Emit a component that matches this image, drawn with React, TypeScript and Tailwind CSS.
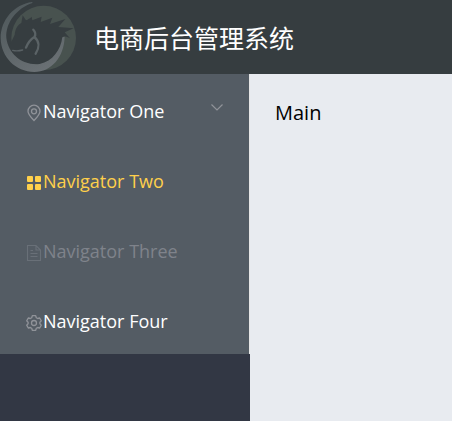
import React from "react";

type IconProps = { className?: string };

function Logo() {
  return (
    <svg viewBox="0 0 228 222" className="h-[74px] w-[76px] shrink-0" aria-hidden="true">
      <defs>
        <linearGradient id="ring" x1="0.2" y1="0" x2="0.7" y2="1">
          <stop offset="0" stopColor="#4f585b" />
          <stop offset="0.5" stopColor="#5c6467" />
          <stop offset="1" stopColor="#6b7175" />
        </linearGradient>
      </defs>
      <circle cx="131" cy="114" r="97" fill="#48524f" />
      {/* Horse head and neck */}
      <path
        d="M28 138 L44 104 C46 86 53 75 64 69 L68 46 L78 61 C84 58 90 55 95 50 L97 61 L125 50 L122 66 L157 53 L150 72 L196 57 L175 81 L221 85 L194 97 L210 115 C203 111 197 109 189 110 C186 145 166 179 127 193 C88 197 50 184 34 154 C29 149 26 144 28 138 Z"
        fill="#363d40"
      />
      <path
        d="M97 6 C42 13 2 60 2 114 C3 171 46 215 103 216 C153 215 192 173 194 110 L187 112 C182 150 158 184 119 192 C69 198 25 163 19 114 C16 67 52 24 97 9 Z"
        fill="url(#ring)"
      />
      <path d="M38 151 C46 153 57 153 68 150" fill="none" stroke="#596164" strokeWidth="4" strokeLinecap="round" />
      <path d="M100 89 C108 98 108 104 103 111 C93 117 84 128 78 143 M103 111 C118 123 119 142 107 161" fill="none" stroke="#5b6366" strokeWidth="7" strokeLinecap="round" />
    </svg>
  );
}

function LocationIcon({ className }: IconProps) {
  return (
    <svg viewBox="0 0 16 18" className={className} fill="none" stroke="currentColor" strokeWidth="1.3" aria-hidden="true">
      <path d="M8 16.5 C4.5 12.8 2 10.3 2 7.2 a6 6 0 0 1 12 0 C14 10.3 11.5 12.8 8 16.5 Z" />
      <circle cx="8" cy="7.3" r="2.5" />
    </svg>
  );
}

function MenuIcon({ className }: IconProps) {
  return (
    <svg viewBox="0 0 16 18" className={className} fill="currentColor" aria-hidden="true">
      <rect x="1" y="2" width="6" height="6" rx="1" />
      <rect x="9" y="2" width="6" height="6" rx="1" />
      <rect x="1" y="10" width="6" height="6" rx="1" />
      <rect x="9" y="10" width="6" height="6" rx="1" />
    </svg>
  );
}

function DocumentIcon({ className }: IconProps) {
  return (
    <svg viewBox="0 0 16 18" className={className} fill="none" stroke="currentColor" strokeWidth="1.1" aria-hidden="true">
      <path d="M1.5 1.5 H10 L14.5 6 V16.5 H1.5 Z M10 1.5 V6 H14.5 M4.5 6.5 H7 M4.5 9.5 H11.5 M4.5 12.5 H11.5" />
    </svg>
  );
}

function SettingIcon({ className }: IconProps) {
  return (
    <svg viewBox="0 0 16 18" className={className} fill="none" stroke="currentColor" strokeWidth="1.3" strokeLinejoin="round" aria-hidden="true">
      <path d="M6.3 1.7 H9.7 L10.3 3.7 L11.7 4.5 L13.7 4 L15.3 6.9 L13.9 8.3 V9.7 L15.3 11.1 L13.7 14 L11.7 13.5 L10.3 14.3 L9.7 16.3 H6.3 L5.7 14.3 L4.3 13.5 L2.3 14 L0.7 11.1 L2.1 9.7 V8.3 L0.7 6.9 L2.3 4 L4.3 4.5 L5.7 3.7 Z" />
      <circle cx="8" cy="9" r="2.5" />
    </svg>
  );
}

const items = [
  { label: "Navigator One", Icon: LocationIcon, color: "text-white", iconColor: "text-[#909399]", submenu: true },
  { label: "Navigator Two", Icon: MenuIcon, color: "text-[#ffd04b]", iconColor: "text-[#ffd04b]" },
  { label: "Navigator Three", Icon: DocumentIcon, color: "text-[#7f838b]", iconColor: "text-[#697078]", disabled: true },
  { label: "Navigator Four", Icon: SettingIcon, color: "text-white", iconColor: "text-[#909399]" },
];

export default function App() {
  return (
    <div className="flex min-h-screen flex-col bg-[#e8ebf0] font-['Open_Sans','Noto_Sans_CJK_SC',sans-serif]">
      <header className="flex h-[74px] items-center gap-[18px] bg-[#363d40] text-white">
        <Logo />
        <h1 className="font-['Noto_Sans_CJK_SC',sans-serif] text-[25px] leading-9">电商后台管理系统</h1>
      </header>

      <div className="flex flex-1">
        <aside className="w-[250px] shrink-0 bg-[#323744]">
          <nav className="border-r border-[#e6e6e6] bg-[#545c64]">
            {items.map(({ label, Icon, color, iconColor, submenu, disabled }) => (
              <button
                key={label}
                type="button"
                disabled={disabled}
                className={`flex h-[70px] w-full items-center gap-px pr-6 pl-[26px] pt-1 text-left text-lg ${color}`}
              >
                <Icon className={`mt-1 h-[18px] w-4 shrink-0 ${iconColor}`} />
                <span>{label}</span>
                {submenu && (
                  <svg viewBox="0 0 16 16" className="mb-2 ml-auto h-4 w-4 text-[#909399]" fill="none" stroke="currentColor" strokeWidth="1.2" aria-hidden="true">
                    <path d="M2.5 5.5 L8 11 L13.5 5.5" />
                  </svg>
                )}
              </button>
            ))}
          </nav>
        </aside>

        <main className="flex-1 p-[25px] text-xl text-black">Main</main>
      </div>
    </div>
  );
}
